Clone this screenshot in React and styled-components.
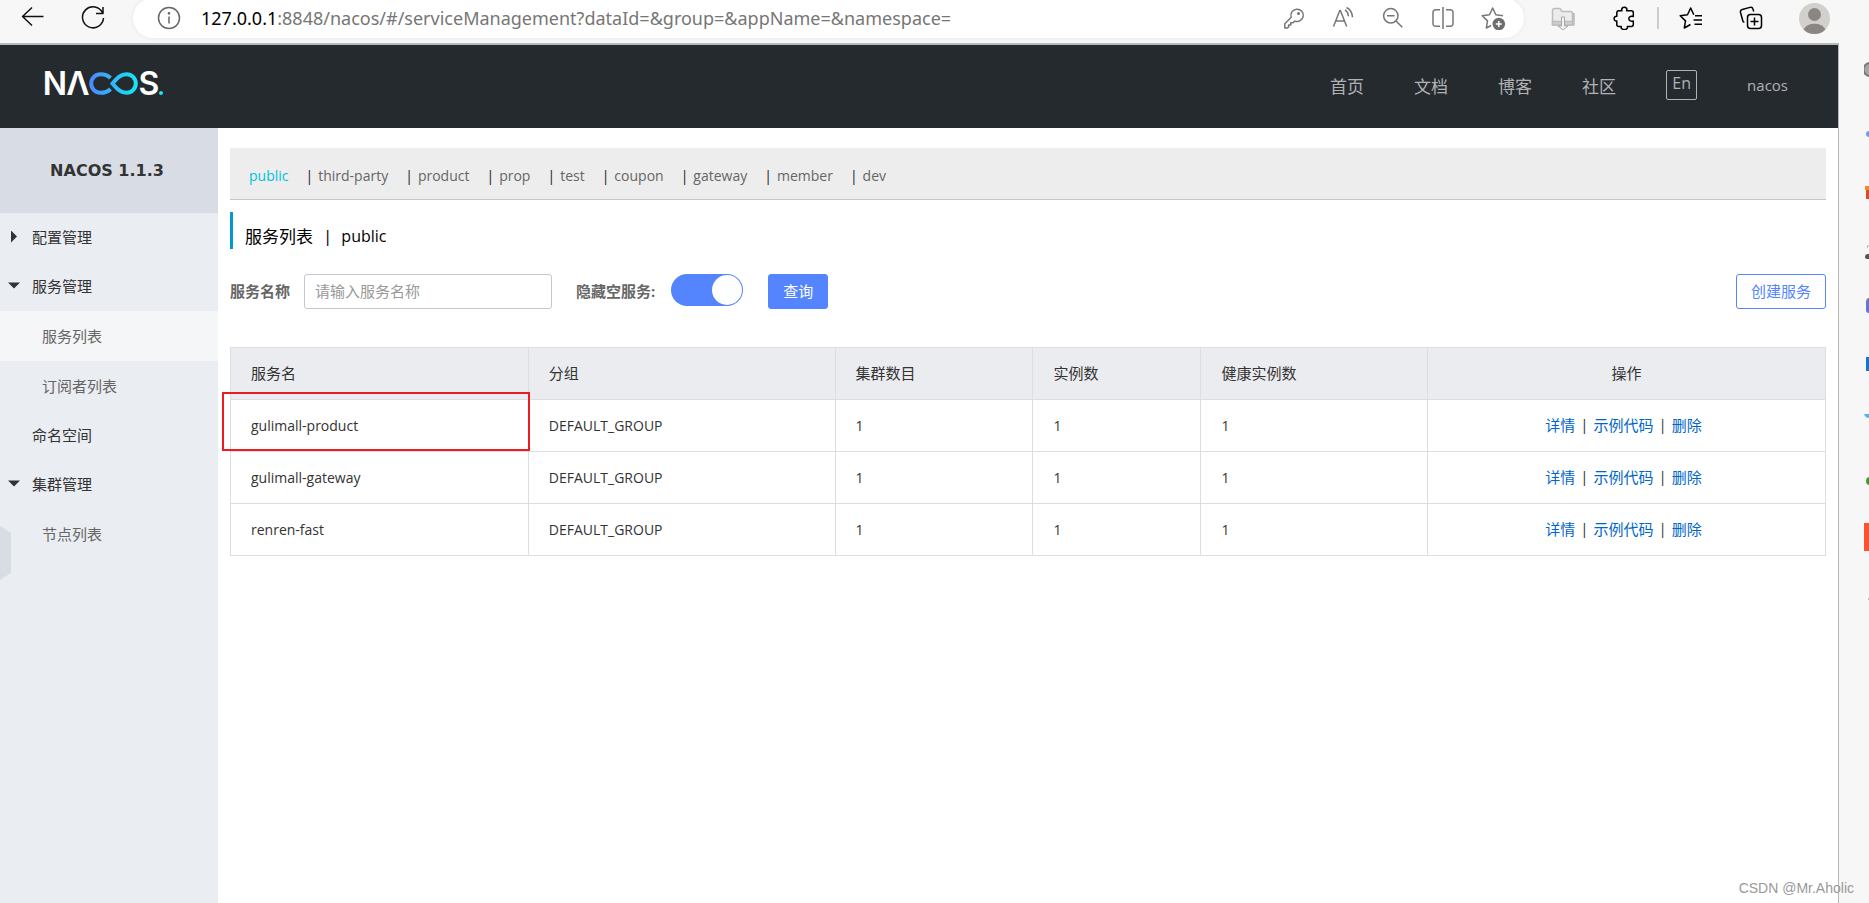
import { Fragment, useState } from "react";
import styled, { createGlobalStyle } from "styled-components";

const namespaces = [
  "public",
  "third-party",
  "product",
  "prop",
  "test",
  "coupon",
  "gateway",
  "member",
  "dev",
];

const menu = [
  { name: "配置管理", arrow: "right" },
  { name: "服务管理", arrow: "down" },
  { name: "服务列表", sub: true, active: true },
  { name: "订阅者列表", sub: true },
  { name: "命名空间" },
  { name: "集群管理", arrow: "down" },
  { name: "节点列表", sub: true },
];

const services = [
  { name: "gulimall-product", group: "DEFAULT_GROUP", cluster: 1, ip: 1, healthy: 1, marked: true },
  { name: "gulimall-gateway", group: "DEFAULT_GROUP", cluster: 1, ip: 1, healthy: 1 },
  { name: "renren-fast", group: "DEFAULT_GROUP", cluster: 1, ip: 1, healthy: 1 },
];

const navLinks = ["首页", "文档", "博客", "社区"];

function BrowserBar() {
  return (
    <Toolbar>
      <NavButtons>
        <IconButton aria-label="Back">
          <Icon viewBox="0 0 24 24" $color="#111">
            <path d="M22.5 10.5H1.500M11 1.500 1.500 10.500l9.500 9" />
          </Icon>
        </IconButton>
        <IconButton aria-label="Refresh">
          <Icon viewBox="0 0 24 24" $color="#111">
            <path d="M21.6 7A10.5 10.5 0 1 0 22.5 12M22 1v6.5h-7" />
          </Icon>
        </IconButton>
      </NavButtons>
      <AddressBar>
        <Icon viewBox="0 0 24 24" $color="#666">
          <circle cx="12" cy="12" r="10.5" />
          <path d="M12 10.5v7" />
          <circle cx="12" cy="7.3" r="0.6" />
        </Icon>
        <Url>
          <b>127.0.0.1</b>:8848/nacos/#/serviceManagement?dataId=&amp;group=&amp;appName=&amp;namespace=
        </Url>
        <AddressTools>
          <IconButton aria-label="Passwords">
            <Icon viewBox="0 0 24 24" $color="#777">
              <path d="M10.2 11.3a6.2 6.2 0 1 1 3.6 3.8L12 16.8H9.8v2.3H7.6v2.1L6.2 22H3.8v-4.2l6.4-6.5z" />
              <circle cx="17.5" cy="7.5" r="0.8" fill="#777" />
            </Icon>
          </IconButton>
          <IconButton aria-label="Read aloud">
            <Icon viewBox="0 0 24 24" $color="#777">
              <path d="M2.5 20.5 8.8 4.5h.6l6.3 16M4.8 15h8.6M14 3.8c2 1.3 3.2 3.6 3.4 6.4M15.5 1.5c3.8 2 5.8 5.4 6 9.8" />
            </Icon>
          </IconButton>
          <IconButton aria-label="Zoom out">
            <Icon viewBox="0 0 24 24" $color="#777">
              <circle cx="9.8" cy="9.8" r="7.2" />
              <path d="m15 15 6.3 6.3M6 9.8h7.6" />
            </Icon>
          </IconButton>
          <IconButton aria-label="Split screen">
            <Icon viewBox="0 0 24 24" $color="#777">
              <path d="M12 1v22M9 3.8H4.5A2.5 2.5 0 0 0 2 6.3v11.4a2.5 2.5 0 0 0 2.5 2.5H9M15 3.8h4.5A2.5 2.5 0 0 1 22 6.3v11.4a2.5 2.5 0 0 1-2.5 2.5H15" />
            </Icon>
          </IconButton>
          <IconButton aria-label="Add to favorites">
            <Icon viewBox="0 0 24 24" $color="#777">
              <path d="M22 9.7 14.8 8.7 11.7 2 8.5 8.7 1.2 9.7l5.3 5.2L5.3 22l4.900-2.500" />
              <circle cx="17.8" cy="18" r="5.5" fill="#6d6d6d" stroke="#6d6d6d" />
              <path d="M17.8 15v6M14.8 18h6" stroke="#fff" />
            </Icon>
          </IconButton>
        </AddressTools>
      </AddressBar>
      <Extensions>
        <IconButton aria-label="Downloader">
          <Icon viewBox="0 0 24 24" $color="#bdbdbd">
            <path d="M1.5 19V4.5a2 2 0 0 1 2-2H9l2 3h8.500a2 2 0 0 1 2 2V19z" fill="#ececec" />
            <path d="M1.5 15.5h20V19h-20z" fill="#cfcfcf" />
            <path d="M22.8 7v12.5" strokeWidth="2" />
            <path d="M10.5 11h3v9H17l-5 4-5-4h3.500z" fill="#f2f2f2" stroke="#a8a8a8" strokeWidth="1" />
          </Icon>
        </IconButton>
        <IconButton aria-label="Extensions">
          <Icon viewBox="0 0 24 24" $color="#000">
            <path d="M5.5 4.8H9c-.9-2 .4-3.500 2.300-3.500s3.200 1.500 2.300 3.500h4.700a2 2 0 0 1 2 2v3.700c-2-.7-4.500.1-4.500 2.200s2.500 2.900 4.500 2.200v3.700a2 2 0 0 1-2 2h-4c.7 1.700-1 3-3 3s-3.700-1.300-3-3H5.800a2 2 0 0 1-2-2v-3.500c-1.700.2-2.700-.9-2.700-2.400s1-2.600 2.700-2.400V6.800a2 2 0 0 1 1.700-2z" />
          </Icon>
        </IconButton>
        <Divider />
        <IconButton aria-label="Favorites">
          <Icon viewBox="0 0 24 24" $color="#000">
            <path d="M14.8 8.7 11.7 2 8.5 8.7 1.2 9.7l5.3 5.2L5.3 22l6.200-3.500M16 9.700h7M14.500 14h8.500M15.500 18.300H23" />
          </Icon>
        </IconButton>
        <IconButton aria-label="Collections">
          <Icon viewBox="0 0 24 24" $color="#000">
            <path d="M5.3 16.5 4 15.5 1.5 6.5a2.500 2.500 0 0 1 1.800-3L11 1.400a2.500 2.500 0 0 1 3 1.700l.7 2.400" />
            <rect x="8.5" y="8.5" width="14" height="14" rx="3" />
            <path d="M15.500 11.500v8M11.500 15.500h8" />
          </Icon>
        </IconButton>
        <IconButton aria-label="Profile">
          <svg width="31" height="31" viewBox="0 0 31 31">
            <circle cx="15.5" cy="15.5" r="15.5" fill="#d2d0cd" />
            <circle cx="15.5" cy="11.5" r="6.5" fill="#8a8683" />
            <path d="M4.5 26.400a12 9.500 0 0 1 22 0A15.500 15.500 0 0 1 4.500 26.400z" fill="#8a8683" />
          </svg>
        </IconButton>
      </Extensions>
    </Toolbar>
  );
}

function Logo() {
  return (
    <svg width="124" height="48" viewBox="0 -10 124 48" role="img" aria-label="NACOS">
      <defs>
        <linearGradient id="loop" x1="0" x2="1">
          <stop offset="0" stopColor="#4a8cff" />
          <stop offset="1" stopColor="#17e4f5" />
        </linearGradient>
      </defs>
      <LogoText x="12" y="25">N</LogoText>
      <LogoText x="35" y="25">Λ</LogoText>
      <path
        d="M67.5 19C65 21.6 61.5 22.8 57.5 22.8a9.3 9.3 0 0 1 0-18.600C61.500 4.200 65 5.400 67.500 8M69.500 13.500C74 8 77.500 4.200 83.500 4.200a9.300 9.300 0 0 1 0 18.600C77.500 22.800 74 19 69.500 13.500z"
        fill="none"
        stroke="url(#loop)"
        strokeWidth="4"
      />
      <LogoText x="106" y="25">S</LogoText>
      <circle cx="118" cy="23" r="2" fill="#17e4f5" />
    </svg>
  );
}

// icons of the browser sidebar, cut off by the window edge
function EdgeBar() {
  return (
    <Edge>
      <svg width="5" height="600" viewBox="0 0 5 600">
        <path d="M6 20a6 6 0 0 0 0 13" fill="#a5a5a5" stroke="#777" strokeWidth="2" />
        <circle cx="5" cy="91" r="3" fill="#6b9cf5" />
        <path d="M1 143h4v13H2v-9H1z" fill="#d8501c" />
        <path d="M1 143h4v4H1z" fill="#f28a1d" />
        <path d="M5 202a3 3 0 0 0-2 3M5 211c-3 0-4 1-4 3 0 1 1 2 2 2h2z" fill="#555" />
        <path d="M5 255c-2 0-3 2-3 4v8c0 2 1 3 3 3z" fill="#6274e0" />
        <path d="M2 314h3v14H2z" fill="#0a77d9" />
        <path d="M0 371h5v4C3 375 1 374 0 371z" fill="#4db8ee" />
        <circle cx="6" cy="438" r="4" fill="#3d9a2c" />
        <path d="M0 480h5v28H0z" fill="#ff5030" />
        <path d="M4 556h1" stroke="#888" />
      </svg>
    </Edge>
  );
}

function ServiceTable() {
  return (
    <Table>
      <colgroup>
        <Col $width={298} />
        <Col $width={307} />
        <Col $width={198} />
        <Col $width={168} />
        <Col $width={227} />
        <Col $width={398} />
      </colgroup>
      <thead>
        <tr>
          <Th>服务名</Th>
          <Th>分组</Th>
          <Th>集群数目</Th>
          <Th>实例数</Th>
          <Th>健康实例数</Th>
          <Th $center>操作</Th>
        </tr>
      </thead>
      <tbody>
        {services.map((s) => (
          <tr key={s.name}>
            <Td $marked={s.marked}>{s.name}</Td>
            <Td>{s.group}</Td>
            <Td>{s.cluster}</Td>
            <Td>{s.ip}</Td>
            <Td>{s.healthy}</Td>
            <Td>
              <Actions>
                <a href="#detail">详情</a>
                <span>|</span>
                <a href="#sample">示例代码</a>
                <span>|</span>
                <a href="#delete">删除</a>
              </Actions>
            </Td>
          </tr>
        ))}
      </tbody>
    </Table>
  );
}

export default function App() {
  const [hideEmpty, setHideEmpty] = useState(true);

  return (
    <Window>
      <GlobalStyle />
      <BrowserBar />
      <Body>
        <Page>
          <Header>
            <Logo />
            <HeaderNav>
              {navLinks.map((text) => (
                <a href="#nav" key={text}>
                  {text}
                </a>
              ))}
              <LangButton>En</LangButton>
              <User href="#user">nacos</User>
            </HeaderNav>
          </Header>
          <Columns>
            <Sidebar>
              <Version>NACOS 1.1.3</Version>
              {menu.map((item) => (
                <MenuItem href="#menu" key={item.name} $sub={item.sub} $active={item.active}>
                  {!item.sub && <Arrow $dir={item.arrow} />}
                  {item.name}
                </MenuItem>
              ))}
              <Collapse aria-label="收起" />
            </Sidebar>
            <Main>
              <NamespaceBar>
                {namespaces.map((ns, i) => (
                  <Fragment key={ns}>
                    {i > 0 && <span>|</span>}
                    <Namespace href="#ns" $active={i === 0}>
                      {ns}
                    </Namespace>
                  </Fragment>
                ))}
              </NamespaceBar>
              <Title>
                服务列表<span>|</span>
                <small>public</small>
              </Title>
              <SearchForm onSubmit={(e) => e.preventDefault()}>
                <Label htmlFor="serviceName">服务名称</Label>
                <TextInput id="serviceName" placeholder="请输入服务名称" />
                <Label htmlFor="hideEmpty">隐藏空服务:</Label>
                <Switch
                  id="hideEmpty"
                  type="checkbox"
                  checked={hideEmpty}
                  onChange={(e) => setHideEmpty(e.target.checked)}
                />
                <Button $primary>查询</Button>
                <Button type="button">创建服务</Button>
              </SearchForm>
              <ServiceTable />
            </Main>
          </Columns>
        </Page>
        <EdgeBar />
      </Body>
      <Watermark>CSDN @Mr.Aholic</Watermark>
    </Window>
  );
}

const GlobalStyle = createGlobalStyle`
  * {
    box-sizing: border-box;
  }
  body {
    margin: 0;
    font-family: "Open Sans", "Noto Sans CJK SC", sans-serif;
    font-size: 14px;
    color: #333;
  }
  a {
    text-decoration: none;
  }
  button, input {
    font-family: inherit;
  }
`;

const Window = styled.div`
  position: relative;
  display: flex;
  flex-direction: column;
  min-height: 100vh;
  background: #f7f7f7;
`;

const Toolbar = styled.div`
  display: flex;
  align-items: flex-start;
  height: 43px;
  padding-right: 39px;
  overflow: hidden;
`;

const NavButtons = styled.div`
  display: flex;
  align-items: center;
  gap: 36px;
  height: 36px;
  padding: 0 28px 0 21px;
`;

const IconButton = styled.button`
  display: flex;
  padding: 0;
  border: 0;
  background: none;
`;

const Icon = styled.svg`
  flex: none;
  width: 24px;
  height: 24px;
  fill: none;
  stroke: ${(p) => p.$color};
  stroke-width: 1.5;
  stroke-linejoin: round;
`;

const AddressBar = styled.div`
  flex: 1;
  display: flex;
  align-items: center;
  height: 40px;
  margin-top: -2px;
  padding: 0 19px 0 24px;
  border-radius: 20px;
  background: #fff;
  box-shadow: 0 0 4px rgba(0, 0, 0, 0.08);
`;

const Url = styled.div`
  flex: 1;
  padding-left: 20px;
  font-family: "Noto Sans", sans-serif;
  font-size: 18px;
  white-space: nowrap;
  color: #767676;

  b {
    font-weight: 400;
    color: #000;
  }
`;

const AddressTools = styled.div`
  display: flex;
  gap: 26px;
`;

const Extensions = styled.div`
  display: flex;
  align-items: center;
  gap: 36px;
  height: 36px;
  padding-left: 27px;

  button:first-child {
    margin-right: 2px;
  }
`;

const Divider = styled.div`
  width: 2px;
  height: 22px;
  margin: 0 -16px;
  background: #ccc;
`;

const Body = styled.div`
  flex: 1;
  display: flex;
`;

const Page = styled.div`
  flex: 1;
  display: flex;
  flex-direction: column;
  border-top: 2px solid #b9b9b9;
  border-right: 1px solid #b9b9b9;
  background: #fff;
`;

const Edge = styled.aside`
  width: 30px;
  display: flex;
  justify-content: flex-end;
  align-items: flex-start;
`;

const Header = styled.header`
  display: flex;
  align-items: center;
  justify-content: space-between;
  height: 83px;
  padding: 0 50px 0 43px;
  background: #252a2f;

  > svg {
    margin-bottom: 6px;
  }
`;

const LogoText = styled.text`
  font-family: Inter, sans-serif;
  font-size: 32px;
  font-weight: 600;
  text-anchor: middle;
  fill: #fff;
`;

const HeaderNav = styled.nav`
  display: flex;
  align-items: center;
  gap: 50px;
  padding-bottom: 3px;

  a {
    font-size: 17px;
    color: #b0b2b3;
  }
`;

const LangButton = styled.button`
  width: 31px;
  height: 30px;
  padding: 0 0 4px;
  border: 1px solid #b0b2b3;
  border-radius: 2px;
  background: none;
  font-size: 16px;
  line-height: 24px;
  color: #b0b2b3;
`;

const User = styled.a`
  && {
    font-size: 15px;
  }
`;

const Columns = styled.div`
  flex: 1;
  display: flex;
`;

const Sidebar = styled.aside`
  position: relative;
  width: 218px;
  background: #eaedf2;
`;

const Version = styled.div`
  height: 85px;
  background: #d8dde5;
  font: 700 16px/85px "DejaVu Sans", sans-serif;
  text-align: center;
  padding-right: 4px;
`;

const MenuItem = styled.a`
  display: flex;
  align-items: center;
  height: ${(p) => (p.$sub ? 50 : 49)}px;
  padding-bottom: 2px;
  padding-left: ${(p) => (p.$sub ? 42 : 8)}px;
  background: ${(p) => (p.$active ? "#f4f6f8" : "transparent")};
  font-size: 15px;
  color: ${(p) => (p.$sub ? "#666" : "#333")};
`;

const Arrow = styled.i`
  width: 12px;
  height: 12px;
  margin-right: 12px;
  background: ${(p) => (p.$dir ? "#333" : "none")};
  clip-path: ${(p) =>
    p.$dir === "down" ? "polygon(0 3px, 100% 3px, 50% 9px)" : "polygon(3px 0, 9px 50%, 3px 100%)"};
`;

const Collapse = styled.button`
  position: absolute;
  left: 0;
  top: 398px;
  width: 11px;
  height: 54px;
  padding: 0;
  border: 0;
  background: #d8dde5;
  clip-path: polygon(0 0, 100% 7px, 100% 47px, 0 100%);
`;

const Main = styled.main`
  flex: 1;
  padding: 20px 12px;
`;

const NamespaceBar = styled.nav`
  display: flex;
  align-items: center;
  height: 52px;
  padding: 3px 19px 0;
  border-bottom: 1px solid #c7c7c7;
  background: #ededed;

  span {
    margin: 0 5px 0 17px;
    color: #222;
  }
`;

const Namespace = styled.a`
  color: ${(p) => (p.$active ? "#00c1de" : "#666")};
`;

const Title = styled.h1`
  display: flex;
  align-items: center;
  height: 37px;
  margin: 12px 0 25px;
  padding: 10px 0 0 12px;
  border-left: 3px solid #09c;
  font-size: 17px;
  font-weight: 400;
  color: #000;

  span {
    margin: 0 9px 0 10px;
  }
  small {
    font-size: 16px;
  }
`;

const SearchForm = styled.form`
  display: flex;
  align-items: center;
  height: 35px;
  margin-bottom: 38px;

  button:last-child {
    margin-left: auto;
  }
`;

const Label = styled.label`
  padding-bottom: 2px;
  font-size: 15px;
  font-weight: 700;
  color: #666;
`;

const TextInput = styled.input`
  width: 248px;
  height: 35px;
  margin: 0 24px 0 14px;
  padding: 0 10px 2px;
  border: 1px solid #c4c6cf;
  border-radius: 3px;
  font-size: 15px;

  &::placeholder {
    color: #999;
  }
`;

const Switch = styled.input`
  appearance: none;
  display: flex;
  align-self: flex-start;
  justify-content: flex-start;
  width: 72px;
  height: 32px;
  margin: 0 25px 0 16px;
  padding: 1px;
  border-radius: 16px;
  background: #c4c6cf;

  &::after {
    content: "";
    width: 30px;
    height: 30px;
    border-radius: 50%;
    background: #fff;
  }
  &:checked {
    justify-content: flex-end;
    background: #5584ff;
  }
`;

const Button = styled.button`
  height: 35px;
  padding: 0 14px 2px;
  border: 1px solid #5584ff;
  border-radius: 3px;
  background: ${(p) => (p.$primary ? "#5584ff" : "#fff")};
  font-size: 15px;
  color: ${(p) => (p.$primary ? "#fff" : "#5584ff")};
`;

const Table = styled.table`
  width: 100%;
  table-layout: fixed;
  border-collapse: collapse;
`;

const Col = styled.col`
  width: calc(100% * ${(p) => p.$width} / 1596);
`;

const Th = styled.th`
  height: 52px;
  padding: 0 20px 2px;
  border: 1px solid #dcdee3;
  background: #ebecf0;
  font-size: 15px;
  font-weight: 400;
  text-align: ${(p) => (p.$center ? "center" : "left")};
`;

const Td = styled.td`
  position: relative;
  height: 52px;
  padding: 0 20px;
  border: 1px solid #dcdee3;

  &::after {
    content: ${(p) => (p.$marked ? '""' : "none")};
    position: absolute;
    inset: -8px -2px 0 -9px;
    border: 2px solid #ed1c24;
  }
`;

const Actions = styled.div`
  display: flex;
  justify-content: center;
  gap: 5px;
  padding: 0 6px 2px 0;
  font-size: 15px;

  a {
    color: #06c;
  }
`;

const Watermark = styled.div`
  position: absolute;
  right: 15px;
  bottom: 7px;
  font: 14px "Liberation Sans", sans-serif;
  color: #999;
`;
